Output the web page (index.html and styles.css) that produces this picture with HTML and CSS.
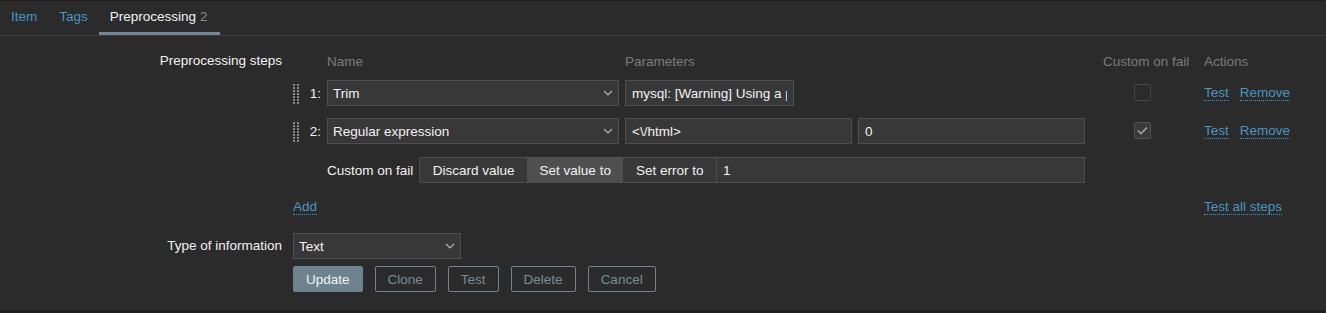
FILE: index.html
```html
<!DOCTYPE html>
<html>
<head>
<meta charset="utf-8">
<link rel="stylesheet" href="styles.css">
</head>
<body>
<div class="page">
  <ul class="tabs">
    <li class="tab">Item</li>
    <li class="tab">Tags</li>
    <li class="tab active">Preprocessing <span class="count">2</span></li>
  </ul>
  <div class="form">
    <div class="form-row">
      <div class="form-label">Preprocessing steps</div>
      <div class="steps">
        <div class="step-row step-head">
          <span></span><span></span>
          <span>Name</span>
          <span>Parameters</span>
          <span class="head-fail">Custom on fail</span>
          <span>Actions</span>
        </div>
        <div class="step-row">
          <span class="handle"></span>
          <span class="num">1:</span>
          <div class="select"><span>Trim</span><svg class="chev" width="10" height="6" viewBox="0 0 10 6"><polyline points="1,1 5,5 9,1" fill="none" stroke="#b4b4b4" stroke-width="1.2"/></svg></div>
          <div class="params"><input class="input input-short" type="text" value="mysql: [Warning] Using a password on the command line interface can be insecure."></div>
          <div class="fail-cell"><span class="checkbox"></span></div>
          <div class="actions"><a class="link">Test</a><a class="link">Remove</a></div>
        </div>
        <div class="step-row">
          <span class="handle"></span>
          <span class="num">2:</span>
          <div class="select"><span>Regular expression</span><svg class="chev" width="10" height="6" viewBox="0 0 10 6"><polyline points="1,1 5,5 9,1" fill="none" stroke="#b4b4b4" stroke-width="1.2"/></svg></div>
          <div class="params"><input class="input input-half" type="text" value="&lt;\/html&gt;"><input class="input input-half" type="text" value="0"></div>
          <div class="fail-cell"><span class="checkbox checked"><svg width="11" height="9" viewBox="0 0 11 9"><polyline points="1,4.5 4,7.5 10,1.5" fill="none" stroke="#9ea6ac" stroke-width="1.6"/></svg></span></div>
          <div class="actions"><a class="link">Test</a><a class="link">Remove</a></div>
        </div>
        <div class="step-row step-fail">
          <div class="fail-line">
            <span class="fail-label">Custom on fail</span>
            <div class="radio-group">
              <span class="radio">Discard value</span>
              <span class="radio on">Set value to</span>
              <span class="radio">Set error to</span>
            </div>
            <input class="input input-fill" type="text" value="1">
          </div>
        </div>
        <div class="step-row step-foot">
          <div class="foot-add"><a class="link">Add</a></div>
          <div class="foot-test"><a class="link">Test all steps</a></div>
        </div>
      </div>
    </div>
    <div class="form-row">
      <div class="form-label">Type of information</div>
      <div class="select select-type"><span>Text</span><svg class="chev" width="10" height="6" viewBox="0 0 10 6"><polyline points="1,1 5,5 9,1" fill="none" stroke="#b4b4b4" stroke-width="1.2"/></svg></div>
    </div>
    <div class="form-row">
      <div></div>
      <div class="buttons">
        <button class="btn btn-main">Update</button>
        <button class="btn">Clone</button>
        <button class="btn">Test</button>
        <button class="btn">Delete</button>
        <button class="btn">Cancel</button>
      </div>
    </div>
  </div>
</div>
</body>
</html>
```
FILE: styles.css
```css
* { box-sizing: border-box; }
html, body { margin: 0; padding: 0; background: #1f1f1f; }
body {
  font-family: "Liberation Sans", Arial, sans-serif;
  font-size: 13.5px;
  color: #f2f2f2;
}
.page {
  margin-top: 1px;
  background: #2b2b2b;
  padding-bottom: 18px;
}
.tabs {
  list-style: none;
  margin: 0;
  padding: 0;
  display: flex;
  height: 35px;
  border-bottom: 1px solid #3c3c3c;
}
.tab {
  display: flex;
  align-items: center;
  height: 34px;
  padding: 0 11px;
  border-bottom: 3px solid transparent;
  color: #4796c4;
}
.tab.active {
  color: #f2f2f2;
  border-bottom-color: #71889a;
  padding-right: 12px;
}
.count { color: #7a909c; margin-left: 4px; }

.form {
  padding-top: 12px;
  display: flex;
  flex-direction: column;
  gap: 7px;
}
.form-row {
  display: grid;
  grid-template-columns: 282px 1fr;
  column-gap: 11px;
  align-items: start;
}
.form-label {
  text-align: right;
  line-height: 26px;
  white-space: nowrap;
}

.step-row {
  display: grid;
  grid-template-columns: 8px 14px 292px 460px 107px auto;
  column-gap: 6px;
  align-items: center;
  padding: 6px 0;
}
.step-head {
  padding: 0;
  height: 26px;
  color: #7b7b7b;
}
.head-fail { padding-left: 12px; }
.handle {
  width: 6px;
  height: 21px;
  background-image:
    linear-gradient(#2b2b2b 1px, transparent 1px),
    linear-gradient(to right, #8c8c8c 2px, transparent 2px);
  background-size: 4px 3px;
}
.num { text-align: right; }

.select {
  height: 26px;
  border: 1px solid #4f4f4f;
  background: #383838;
  display: flex;
  align-items: center;
  justify-content: space-between;
  padding: 0 5px 0 5px;
}
.select-type { width: 168px; }
.chev { display: block; }

.input {
  height: 26px;
  border: 1px solid #4f4f4f;
  background: #383838;
  color: #f2f2f2;
  font: inherit;
  padding: 0 6px;
  margin: 0;
  outline: none;
}
.input-short { width: 169px; }
.params { display: flex; gap: 6px; }
.input-half { flex: 1; min-width: 0; }

.fail-cell { display: flex; padding-left: 43px; }
.checkbox {
  width: 17px;
  height: 17px;
  border: 1px solid #454545;
  background: #2b2b2b;
  border-radius: 2px;
  display: flex;
  align-items: center;
  justify-content: center;
  margin-top: -1px;
}
.checkbox.checked {
  background: #3a3a3a;
  border-color: #525252;
}

.actions { display: flex; gap: 11px; }
.link {
  color: #4796c4;
  border-bottom: 1px dotted #4796c4;
  line-height: 15px;
  cursor: pointer;
}

.step-fail { padding: 7px 0 5px; }
.fail-line {
  grid-column: 3 / 5;
  display: flex;
  align-items: center;
}
.fail-label { margin-right: 6px; white-space: nowrap; }
.radio-group {
  display: flex;
  height: 26px;
  border: 1px solid #4f4f4f;
  border-radius: 2px 0 0 2px;
  background: #383838;
}
.radio {
  display: flex;
  align-items: center;
  padding: 0 12.5px;
  white-space: nowrap;
}
.radio.on { background: #4f4f4f; }
.input-fill { flex: 1; min-width: 0; margin-left: -1px; }

.step-foot { padding: 6px 0; height: 38px; }
.foot-add { grid-column: 1 / 5; display: flex; }
.foot-test { grid-column: 6; display: flex; }

.buttons { display: flex; gap: 12px; }
.btn {
  height: 26px;
  padding: 0 12px;
  border: 1px solid #6e8593;
  border-radius: 2px;
  background: transparent;
  color: #768d99;
  font: inherit;
  margin: 0;
}
.btn-main {
  background: #6d8490;
  border-color: #6d8490;
  color: #f2f2f2;
}
```
